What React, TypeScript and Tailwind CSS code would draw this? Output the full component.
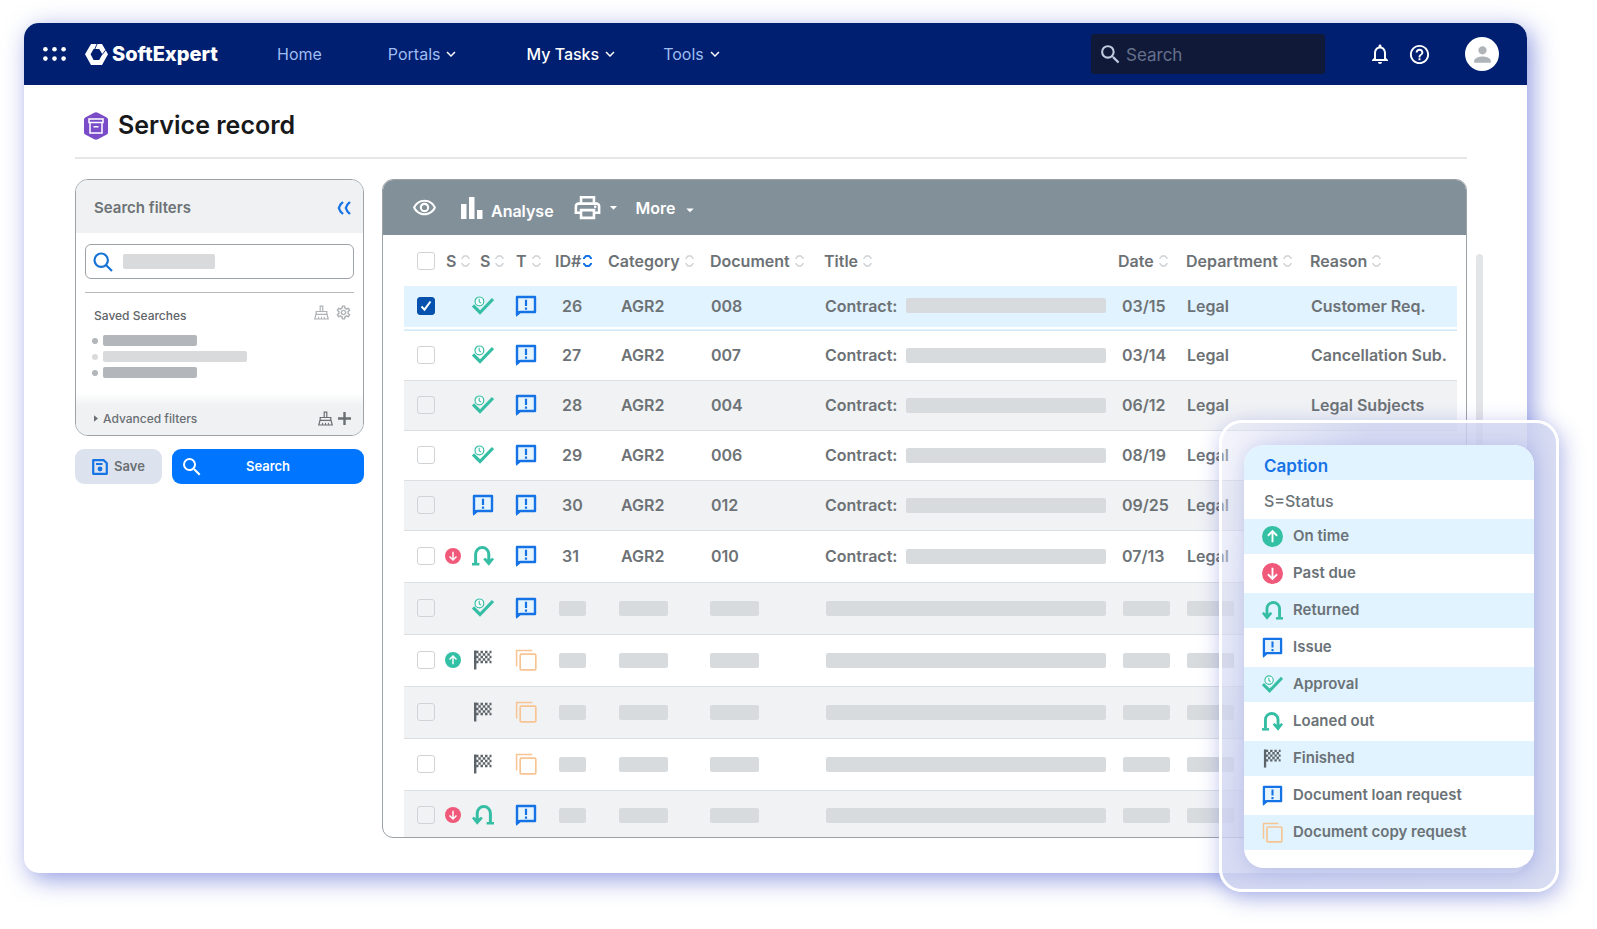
import { useState } from 'react';
import type { ReactNode } from 'react';
import {
    MdArrowDropDown,
    MdHelpOutline,
    MdKeyboardArrowDown,
    MdNotificationsNone,
    MdOutlinePrint,
    MdOutlineRemoveRedEye,
    MdOutlineSettings,
    MdPerson,
    MdSearch,
} from 'react-icons/md';

type IconName = 'onTime' | 'pastDue' | 'returned' | 'issue' | 'approval' | 'loaned' | 'finished' | 'copy';

interface RecordRow {
    status?: IconName;
    stage: IconName;
    type: IconName;
    id?: string;
    category?: string;
    document?: string;
    date?: string;
    department?: string;
    reason?: string;
    height: string;
    background: string;
}

const WHITE = 'border-[#dcdfe2]';
const GRAY = 'bg-[#f0f2f4] border-[#dcdfe2]';
const SELECTED = 'bg-[linear-gradient(#e1f3fe_41px,#fff_41px)] border-[#d3e8f4] *:pb-1';

const rows: RecordRow[] = [
    { stage: 'approval', type: 'issue', id: '26', category: 'AGR2', document: '008', date: '03/15', department: 'Legal', reason: 'Customer Req.', height: 'h-11', background: SELECTED },
    { stage: 'approval', type: 'issue', id: '27', category: 'AGR2', document: '007', date: '03/14', department: 'Legal', reason: 'Cancellation Sub.', height: 'h-[50px]', background: WHITE },
    { stage: 'approval', type: 'issue', id: '28', category: 'AGR2', document: '004', date: '06/12', department: 'Legal', reason: 'Legal Subjects', height: 'h-[50px]', background: GRAY },
    { stage: 'approval', type: 'issue', id: '29', category: 'AGR2', document: '006', date: '08/19', department: 'Legal', height: 'h-[50px]', background: WHITE },
    { stage: 'issue', type: 'issue', id: '30', category: 'AGR2', document: '012', date: '09/25', department: 'Legal', height: 'h-[50px]', background: GRAY },
    { status: 'pastDue', stage: 'loaned', type: 'issue', id: '31', category: 'AGR2', document: '010', date: '07/13', department: 'Legal', height: 'h-[52px]', background: WHITE },
    { stage: 'approval', type: 'issue', height: 'h-[52px]', background: GRAY },
    { status: 'onTime', stage: 'finished', type: 'copy', height: 'h-[52px]', background: WHITE },
    { stage: 'finished', type: 'copy', height: 'h-[52px]', background: GRAY },
    { stage: 'finished', type: 'copy', height: 'h-[52px]', background: WHITE },
    { status: 'pastDue', stage: 'returned', type: 'issue', height: 'h-[47px]', background: GRAY },
];

const columns = [
    { label: 'S', width: 'w-[29px]', pad: 'pl-[5px]' },
    { label: 'S', width: 'w-[35px]', pad: 'pl-[10px]' },
    { label: 'T', width: 'w-[47px]', pad: 'pl-[11px]' },
    { label: 'ID#', width: 'w-[56px]', pad: 'pl-[3px]', active: true },
    { label: 'Category', width: 'w-[102px]', pad: '' },
    { label: 'Document', width: 'w-[114px]', pad: '' },
    { label: 'Title', width: '', pad: '' },
    { label: 'Date', width: 'w-[68px]', pad: '' },
    { label: 'Department', width: 'w-[124px]', pad: '' },
    { label: 'Reason', width: 'w-[147px]', pad: '' },
];

const captions: { icon: IconName; label: string }[] = [
    { icon: 'onTime', label: 'On time' },
    { icon: 'pastDue', label: 'Past due' },
    { icon: 'returned', label: 'Returned' },
    { icon: 'issue', label: 'Issue' },
    { icon: 'approval', label: 'Approval' },
    { icon: 'loaned', label: 'Loaned out' },
    { icon: 'finished', label: 'Finished' },
    { icon: 'issue', label: 'Document loan request' },
    { icon: 'copy', label: 'Document copy request' },
];

const StatusIcon = ({ name, size = 22 }: { name: IconName; size?: number }) => {
    const box = { width: size, height: size, viewBox: '0 0 22 22', fill: 'none', 'aria-hidden': true, className: 'block shrink-0' };
    switch (name) {
        case 'onTime':
        case 'pastDue':
            return (
                <svg {...box}>
                    <circle cx="11" cy="11" r="11" fill={name === 'onTime' ? '#33c0a4' : '#f0597a'} />
                    <path
                        d={name === 'onTime' ? 'M11 17V6M6.2 10.2 11 5.4l4.8 4.8' : 'M11 5v11M6.2 11.8 11 16.6l4.8-4.8'}
                        stroke="#fff"
                        strokeWidth="2"
                    />
                </svg>
            );
        case 'issue':
            return (
                <svg {...box}>
                    <path d="M2 2h18v15H5l-3 2.6z" fill="#e6f4fe" stroke="#1673e6" strokeWidth="2.4" strokeLinejoin="round" />
                    <path d="M1 16h5.5L1 22z" fill="#1673e6" />
                    <path d="M11 4.8v6.2M11 12.6v2.2" stroke="#1673e6" strokeWidth="2.2" />
                </svg>
            );
        case 'approval':
            return (
                <svg {...box}>
                    <path d="M1 10.5 8 17.5 21 4" stroke="#36bea4" strokeWidth="3.2" />
                    <circle cx="7.4" cy="6.4" r="5.6" fill="#fff" fillOpacity=".7" />
                    <circle cx="7.4" cy="6.4" r="4.4" stroke="#36bea4" strokeWidth="1.2" />
                    <path d="M7.2 3.8v2.9l1.8 1.4" stroke="#36bea4" strokeWidth="1.1" />
                </svg>
            );
        case 'loaned':
            return (
                <svg {...box}>
                    <path d="M3.6 18V9.2a6.6 6.6 0 0 1 13.2 0V17" stroke="#36bea4" strokeWidth="3" />
                    <path d="M0 19.2h7.4" stroke="#36bea4" strokeWidth="2.6" />
                    <path d="m11.2 14.2 1.8-1.5 3.8 2.6 3.5-2.6 1.7 1.5-5.2 6.6z" fill="#36bea4" />
                </svg>
            );
        case 'returned':
            return (
                <svg {...box}>
                    <path d="M18.4 18V9.2a6.6 6.6 0 0 0-13.2 0V17" stroke="#36bea4" strokeWidth="3" />
                    <path d="M14.6 19.2H22" stroke="#36bea4" strokeWidth="2.6" />
                    <path d="M10.8 14.2 9 12.7l-3.8 2.6-3.5-2.6L0 14.2l5.2 6.6z" fill="#36bea4" />
                </svg>
            );
        case 'finished':
            return (
                <svg {...box}>
                    <path d="M3.2 1.5v19" stroke="#5d646a" strokeWidth="2.4" />
                    <path d="M4 3h15.5M4 8h15.5M4 13h15.5" stroke="#5d646a" strokeWidth="2.5" strokeDasharray="2.5 2" />
                    <path d="M6.3 5.5h13.4M6.3 10.5h13.4" stroke="#5d646a" strokeWidth="2.5" strokeDasharray="2.5 2" />
                </svg>
            );
        case 'copy':
            return (
                <svg {...box}>
                    <rect x="5.2" y="5.2" width="15.6" height="15.6" rx="1" stroke="#f8c492" strokeWidth="1.7" />
                    <path d="M1.6 17.5V1.6h15.6" stroke="#f8c492" strokeWidth="1.5" />
                </svg>
            );
    }
};

const SortIcon = ({ active }: { active?: boolean }) => (
    <svg width="9" height="14" viewBox="0 0 9 14" fill="none" className="shrink-0" aria-hidden>
        <path
            d="M1 5V4.2L3 2h3l2 2.2V5M1 9v.8L3 12h3l2-2.2V9"
            stroke={active ? '#1673e6' : '#cfd2d5'}
            strokeWidth={active ? 2 : 1.4}
        />
    </svg>
);

const BrushIcon = () => (
    <svg width="15" height="15" viewBox="0 0 15 15" fill="none" stroke="currentColor" className="block" aria-hidden>
        <path d="M6.2 6.5V1.2h2.6v5.3M2.2 9.5v-3h10.6v3" strokeWidth="1.2" />
        <path d="M2 9.4 .8 14h13.4L13 9.4z" strokeWidth="1.2" />
        <path d="M4.6 14v-2.2M7.5 14v-2.2M10.4 14v-2.2" strokeWidth="1" />
    </svg>
);

const Checkbox = ({ label, checked, onChange }: { label: string; checked: boolean; onChange: () => void }) => (
    <span className="relative ml-[13px] block size-[18px]">
        <input
            type="checkbox"
            aria-label={label}
            checked={checked}
            onChange={onChange}
            className="peer block size-[18px] appearance-none rounded-[3px] border border-[#d0d3d6] checked:border-[#0551ad] checked:bg-[#0551ad]"
        />
        <svg viewBox="0 0 18 18" fill="none" className="pointer-events-none absolute inset-0 hidden peer-checked:block" aria-hidden>
            <path d="m4.5 9.5 3 3.2 6-8.2" stroke="#fff" strokeWidth="2" />
        </svg>
    </span>
);

const Bar = ({ className }: { className: string }) => (
    <span className={`block h-[15px] rounded-[2px] bg-[#d8dbdd] ${className}`}></span>
);

const NavItem = ({ label, active, menu }: { label: string; active?: boolean; menu?: boolean }) => (
    <a href="#" className={`flex items-center gap-[2px] ${active ? 'font-medium text-white' : 'text-[#9fbdf2]'}`}>
        {label}
        {menu && <MdKeyboardArrowDown size={18} className="text-white" aria-hidden />}
    </a>
);

const TopBar = () => (
    <header className="flex h-[62px] items-center rounded-t-[15px] bg-[#001f70] pr-7 pl-[19px]">
        <button type="button" aria-label="Applications">
            <svg width="24" height="14" viewBox="0 0 24 14" fill="#fff" aria-hidden>
                {[2.4, 11.5, 20.6].map((x) => [2.3, 11.6].map((y) => <circle key={`${x}-${y}`} cx={x} cy={y} r="2.3" />))}
            </svg>
        </button>
        <a href="#" className="ml-[18px] flex w-[192px] shrink-0 items-center gap-1 text-[20px] font-extrabold text-white">
            <svg width="23" height="21" viewBox="0 0 23 21" aria-hidden>
                <path
                    fill="#fff"
                    fillRule="evenodd"
                    d="M6 0h11l6 10.3L17 21H6L0 10.3zM8.6 5 5.6 10.3l3 5.7h5.6l3.2-5.7L14.2 5z"
                />
                <path d="M9.8 5.2 12 0M17.2 10.6l3.4-4.5" stroke="#001f70" strokeWidth=".9" />
            </svg>
            SoftExpert
        </a>
        <nav className="flex flex-1 items-center gap-[66px] text-[16px] whitespace-nowrap">
            <NavItem label="Home" />
            <NavItem label="Portals" menu />
            <div className="flex gap-11">
                <NavItem label="My Tasks" active menu />
                <NavItem label="Tools" menu />
            </div>
        </nav>
        <label className="flex h-10 w-[234px] items-center rounded-[3px] bg-[#101a38] pl-[7px] text-[#c3cbe0]">
            <MdSearch size={25} className="shrink-0" aria-hidden />
            <input
                type="search"
                aria-label="Search"
                placeholder="Search"
                className="ml-[3px] h-full min-w-0 flex-1 bg-transparent pt-[2px] text-[17px] outline-none placeholder:text-[#66708c]"
            />
        </label>
        <button type="button" aria-label="Notifications" className="ml-[43px] text-white">
            <MdNotificationsNone size={24} />
        </button>
        <button type="button" aria-label="Help" className="ml-4 text-white">
            <MdHelpOutline size={23} />
        </button>
        <button type="button" aria-label="Profile" className="ml-[34px] flex size-[34px] items-center justify-center rounded-full bg-white text-[#afb4b8]">
            <MdPerson size={25} />
        </button>
    </header>
);

const SavedSearch = ({ color, width }: { color: string; width: string }) => (
    <li className="flex items-center gap-[5px]">
        <span className={`size-[6px] rounded-full ${color}`}></span>
        <span className={`h-[11px] rounded-[2px] ${color} ${width}`}></span>
    </li>
);

const SearchFilters = () => (
    <aside className="w-[289px] shrink-0">
        <div className="overflow-hidden rounded-[13px] border border-[#9da2a6]">
            <div className="flex h-[53px] items-center justify-between bg-[#eff1f3] pt-[3px] pr-3 pl-[18px]">
                <h2 className="text-[15px] font-semibold text-[#6d7276]">Search filters</h2>
                <button type="button" aria-label="Collapse filters" className="text-[#1673e6]">
                    <svg width="14" height="14" viewBox="0 0 14 14" fill="none" stroke="currentColor" strokeWidth="2.2" aria-hidden>
                        <path d="M6 1 3.5 3.5 1.8 7l1.7 3.5L6 13M13 1l-2.5 2.5L8.8 7l1.7 3.5L13 13" />
                    </svg>
                </button>
            </div>
            <div className="px-[9px] pt-[11px]">
                <label className="flex h-[35px] items-center rounded-md border border-[#9da2a6] px-[5px]">
                    <svg width="20" height="20" viewBox="0 0 20 20" fill="none" stroke="#1673d6" strokeWidth="2.2" className="ml-[2px] shrink-0" aria-hidden>
                        <circle cx="8.2" cy="8.2" r="6.7" />
                        <path d="m13 13 6 6" />
                    </svg>
                    <span className="ml-[10px] h-[15px] w-[92px] rounded-[2px] bg-[#d8dadc]"></span>
                    <input type="text" aria-label="Filter text" className="min-w-0 flex-1 bg-transparent outline-none" />
                </label>
                <div className="mt-[13px] border-t border-[#b5b9bc] pt-[11px]">
                    <div className="flex items-start justify-between pr-[2px] pl-[9px]">
                        <h3 className="pt-1 text-[12px] leading-4 font-medium text-[#5f6468]">Saved Searches</h3>
                        <div className="flex items-center gap-[6px] text-[#aeb2b5]">
                            <button type="button" aria-label="Clear saved searches">
                                <BrushIcon />
                            </button>
                            <button type="button" aria-label="Saved search settings">
                                <MdOutlineSettings size={17} className="block" />
                            </button>
                        </div>
                    </div>
                    <ul className="space-y-[5px] pt-[11px] pb-[15px] pl-[7px]">
                        <SavedSearch color="bg-[#b3b6ba]" width="w-[94px]" />
                        <SavedSearch color="bg-[#d8dadc]" width="w-[144px]" />
                        <SavedSearch color="bg-[#b3b6ba]" width="w-[94px]" />
                    </ul>
                </div>
            </div>
            <div className="flex h-[42px] items-center justify-between bg-linear-to-b from-white to-[#eff1f3] to-30% pt-[9px] pr-3 pl-[18px] text-[#6a6f73]">
                <button type="button" className="flex items-center gap-[5px] text-[12px] font-medium">
                    <svg width="4" height="7" viewBox="0 0 5 8" fill="currentColor" aria-hidden>
                        <path d="m0 0 5 4-5 4z" />
                    </svg>
                    Advanced filters
                </button>
                <div className="flex items-center gap-[5px]">
                    <button type="button" aria-label="Clear advanced filters">
                        <BrushIcon />
                    </button>
                    <button type="button" aria-label="Add filter">
                        <svg width="13" height="13" viewBox="0 0 13 13" stroke="currentColor" strokeWidth="2.4" aria-hidden>
                            <path d="M6.5 0v13M0 6.5h13" />
                        </svg>
                    </button>
                </div>
            </div>
        </div>
        <div className="mt-[13px] flex gap-[10px]">
            <button type="button" className="flex h-[35px] w-[87px] items-center justify-center gap-[6px] rounded-[9px] bg-[#dde3ee] text-[13px] font-semibold text-[#6a6f73]">
                <svg width="16" height="16" viewBox="0 0 16 16" fill="none" stroke="#1673e6" strokeWidth="2.2" strokeLinejoin="round" aria-hidden>
                    <path d="M1.2 1.2h10.6l3 3v10.6H1.2zM4 5h6.5" />
                    <circle cx="8" cy="10" r="2.4" fill="#1673e6" stroke="none" />
                </svg>
                Save
            </button>
            <button type="button" className="flex h-[35px] flex-1 items-center rounded-[9px] bg-[#0075ff] pl-2 text-[13px] font-semibold text-white">
                <MdSearch size={24} aria-hidden />
                <span className="flex-1 pr-8 text-center">Search</span>
            </button>
        </div>
    </aside>
);

const Toolbar = () => (
    <div className="flex h-[55px] items-center bg-[#82909a] pl-[29px] text-[16px] font-semibold text-white">
        <button type="button" aria-label="View">
            <MdOutlineRemoveRedEye size={25} />
        </button>
        <button type="button" className="ml-[24px] flex items-center gap-2">
            <svg width="22" height="22" viewBox="0 0 22 22" fill="#fff" aria-hidden>
                <path d="M0 7h5.5v15H0zM8 0h5.5v22H8zM16 13h5.5v9H16z" />
            </svg>
            <span className="pt-[6px]">Analyse</span>
        </button>
        <button type="button" aria-label="Print" className="ml-[18px] flex items-center gap-[2px]">
            <MdOutlinePrint size={31} />
            <MdArrowDropDown size={17} />
        </button>
        <button type="button" className="ml-[14px] flex items-center gap-[5px]">
            More
            <MdArrowDropDown size={18} className="mt-1" />
        </button>
    </div>
);

const RecordsTable = () => {
    const [selected, setSelected] = useState<number[]>([0]);

    const toggle = (index: number) =>
        setSelected((current) => (current.includes(index) ? current.filter((i) => i !== index) : [...current, index]));

    const toggleAll = () => setSelected(selected.length === rows.length ? [] : rows.map((_, i) => i));

    const cell = (value: string | undefined, textPad: string, bar: string): ReactNode =>
        value ? <span className={`block ${textPad}`}>{value}</span> : <Bar className={bar} />;

    return (
        <section className="min-w-0 flex-1 overflow-hidden rounded-[11px] border border-[#9da2a6]">
            <Toolbar />
            <div className="pr-[9px] pl-[21px]">
                <table className="w-full table-fixed border-collapse text-left text-[16px] font-semibold whitespace-nowrap text-[#6d7276]">
                    <thead>
                        <tr className="h-[51px]">
                            <th className="w-[37px]">
                                <Checkbox label="Select all records" checked={selected.length === rows.length} onChange={toggleAll} />
                            </th>
                            {columns.map((column, index) => (
                                <th key={index} className={`font-semibold ${column.width} ${column.pad}`}>
                                    <button type="button" className={`flex items-center ${column.active ? 'gap-[2px]' : 'gap-[5px]'}`}>
                                        {column.label}
                                        <SortIcon active={column.active} />
                                    </button>
                                </th>
                            ))}
                        </tr>
                    </thead>
                    <tbody>
                        {rows.map((row, index) => (
                            <tr key={index} className={`border-b last:border-b-0 last:*:pt-[3px] ${row.height} ${row.background}`}>
                                <td>
                                    <Checkbox label={`Select record ${index + 1}`} checked={selected.includes(index)} onChange={() => toggle(index)} />
                                </td>
                                <td className="pl-1">{row.status && <StatusIcon name={row.status} size={16} />}</td>
                                <td className="pl-[2px]">
                                    <StatusIcon name={row.stage} />
                                </td>
                                <td className="pl-[10px]">
                                    <StatusIcon name={row.type} />
                                </td>
                                <td>{cell(row.id, 'pl-[10px]', 'ml-[7px] w-[27px]')}</td>
                                <td>{cell(row.category, 'pl-[13px]', 'ml-[11px] w-[49px]')}</td>
                                <td>{cell(row.document, 'pl-px', 'w-[49px]')}</td>
                                <td className="pr-3">
                                    {row.id ? (
                                        <span className="flex items-center">
                                            <span className="w-[82px] shrink-0 pl-px">Contract:</span>
                                            <Bar className="flex-1" />
                                        </span>
                                    ) : (
                                        <Bar className="ml-[2px]" />
                                    )}
                                </td>
                                <td>{cell(row.date, 'pl-1', 'ml-[5px] w-[47px]')}</td>
                                <td>{cell(row.department, 'pl-px', 'ml-px w-[47px]')}</td>
                                <td>
                                    <span className="block pl-px">{row.reason}</span>
                                </td>
                            </tr>
                        ))}
                    </tbody>
                </table>
            </div>
        </section>
    );
};

const CaptionCard = () => (
    <div className="absolute top-[397px] -right-8 w-[340px] rounded-[23px] border-3 border-white bg-[linear-gradient(110deg,rgba(225,228,245,0.35),rgba(205,210,240,0.8)_30%,rgba(208,214,240,0.85))] px-[22px] pt-[22px] pb-[21px] shadow-[3px_6px_22px_rgba(80,95,205,0.45)]">
        <div className="overflow-hidden rounded-[20px] bg-white pb-[18px] text-[15px] font-semibold text-[#6a7277] shadow-[2px_2px_18px_rgba(80,95,205,0.25)]">
            <h2 className="flex h-[35px] items-center bg-[#e1f3fe] pt-2 pl-5 text-[17px] text-[#1673e6]">Caption</h2>
            <p className="flex h-[39px] items-center pt-[2px] pl-5 text-[16px] font-medium">S=Status</p>
            <ul>
                {captions.map(({ icon, label }) => (
                    <li key={label} className="flex h-[39px] items-center gap-[10px] pb-px pl-[17px] odd:h-[35px] odd:bg-[#e1f3fe] odd:pb-0">
                        <span className="flex w-[22px] justify-center">
                            <StatusIcon name={icon} size={21} />
                        </span>
                        {label}
                    </li>
                ))}
            </ul>
        </div>
    </div>
);

const App = () => (
    <div className="min-h-screen overflow-hidden bg-white pt-[23px] pr-[70px] pb-14 pl-6 font-['Inter',sans-serif]">
        <div className="relative rounded-[15px] bg-white shadow-[5px_6px_24px_rgba(70,88,205,0.6)]">
            <TopBar />
            <main className="pr-[60px] pb-[35px] pl-[51px]">
                <div className="flex h-[74px] items-center gap-[9px] border-b-2 border-[#e6e7e9] pt-[10px] pl-2">
                    <svg width="26" height="28" viewBox="0 0 26 28" fill="none" aria-hidden>
                        <path
                            d="M11.2.8a4 4 0 0 1 3.6 0l9 4.6A2.5 2.5 0 0 1 25 7.6v12.8a2.5 2.5 0 0 1-1.2 2.2l-9 4.6a4 4 0 0 1-3.6 0l-9-4.6A2.5 2.5 0 0 1 1 20.4V7.6a2.5 2.5 0 0 1 1.2-2.2z"
                            fill="#7a4cc8"
                        />
                        <path d="M6 7h14v3.6H6zM7 10.6h12V21H7zM10.5 14.7h5" stroke="#fff" strokeWidth="1.5" />
                    </svg>
                    <h1 className="text-[25px] font-semibold text-[#17181a]">Service record</h1>
                </div>
                <div className="flex items-start gap-[18px] pt-5">
                    <SearchFilters />
                    <div className="relative flex min-w-0 flex-1">
                        <RecordsTable />
                        <div className="absolute top-[75px] -right-4 h-[200px] w-[7px] rounded-full bg-[#e4e5e7]"></div>
                    </div>
                </div>
            </main>
            <CaptionCard />
        </div>
    </div>
);

export default App;
